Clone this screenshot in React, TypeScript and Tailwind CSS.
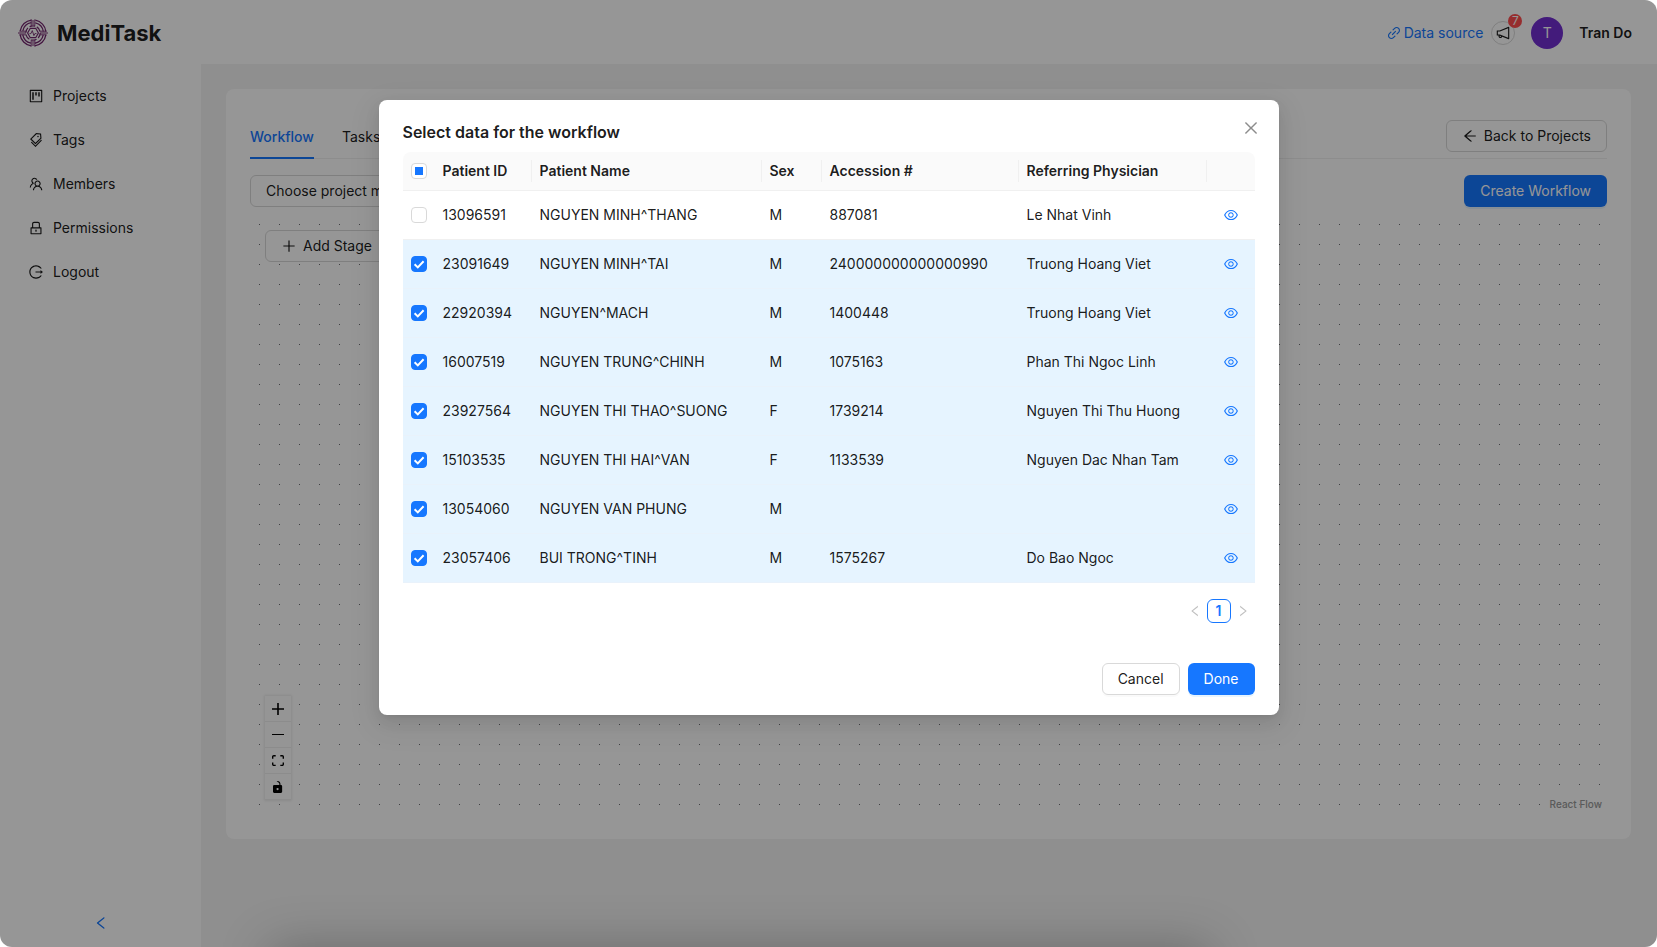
import { useEffect, useRef, useState } from "react";
import type { ReactNode } from "react";
import {
  AiOutlineArrowLeft,
  AiOutlineClose,
  AiOutlineEye,
  AiOutlineLeft,
  AiOutlineLink,
  AiOutlineLock,
  AiOutlineLogout,
  AiOutlineNotification,
  AiOutlinePlus,
  AiOutlineProject,
  AiOutlineRight,
  AiOutlineTags,
  AiOutlineTeam,
} from "react-icons/ai";

type Patient = {
  id: string;
  name: string;
  sex: string;
  accession: string;
  physician: string;
};

const patients: Patient[] = [
  { id: "13096591", name: "NGUYEN MINH^THANG", sex: "M", accession: "887081", physician: "Le Nhat Vinh" },
  { id: "23091649", name: "NGUYEN MINH^TAI", sex: "M", accession: "240000000000000990", physician: "Truong Hoang Viet" },
  { id: "22920394", name: "NGUYEN^MACH", sex: "M", accession: "1400448", physician: "Truong Hoang Viet" },
  { id: "16007519", name: "NGUYEN TRUNG^CHINH", sex: "M", accession: "1075163", physician: "Phan Thi Ngoc Linh" },
  { id: "23927564", name: "NGUYEN THI THAO^SUONG", sex: "F", accession: "1739214", physician: "Nguyen Thi Thu Huong" },
  { id: "15103535", name: "NGUYEN THI HAI^VAN", sex: "F", accession: "1133539", physician: "Nguyen Dac Nhan Tam" },
  { id: "13054060", name: "NGUYEN VAN PHUNG", sex: "M", accession: "", physician: "" },
  { id: "23057406", name: "BUI TRONG^TINH", sex: "M", accession: "1575267", physician: "Do Bao Ngoc" },
];

const navItems = [
  { label: "Projects", icon: AiOutlineProject },
  { label: "Tags", icon: AiOutlineTags },
  { label: "Members", icon: AiOutlineTeam },
  { label: "Permissions", icon: AiOutlineLock },
  { label: "Logout", icon: AiOutlineLogout },
];

const columns = [
  { title: "Patient ID", width: "w-[97px]" },
  { title: "Patient Name", width: "w-[230px]" },
  { title: "Sex", width: "w-[60px]" },
  { title: "Accession #", width: "w-[197px]" },
  { title: "Referring Physician", width: "w-[188px]" },
];

function Logo() {
  return (
    <svg viewBox="0 0 30 30" className="size-[30px]" fill="none" stroke="#74286f" aria-hidden="true">
      <circle cx="15" cy="15" r="13" strokeWidth="1.3" strokeDasharray="16.42 4" strokeDashoffset="-2" />
      <circle cx="15" cy="15" r="10.4" strokeWidth="1.3" strokeDasharray="12.34 4" strokeDashoffset="-2" />
      <path d="M13.2 1.4v7M16.8 1.4v7M13.2 21.6v7M16.8 21.6v7M1.4 13.2h7M1.4 16.8h7M21.6 13.2h7M21.6 16.8h7" strokeWidth=".9" />
      <path d="M0 15h8M22 15h8M15 2v5M15 23v5" strokeWidth="1" />
      <circle cx="15" cy="15" r="7.2" strokeWidth="1.2" strokeDasharray="5.5 2.04" />
      <path d="M12.3 10.3h5.4l2.7 4.7-2.7 4.7h-5.4L9.6 15z" strokeWidth="1.2" />
      <path d="M11.5 15.6h1.4l1.4-3 1.6 5 1-2h1.6" strokeWidth=".9" />
    </svg>
  );
}

function Header() {
  return (
    <header className="flex h-16 items-center justify-between bg-white pt-0.5 pr-[25px] pl-[18px]">
      <div className="flex items-center gap-[9px]">
        <Logo />
        <h1 className="text-[22px] font-bold">MediTask</h1>
      </div>
      <div className="flex items-center">
        <a href="#data-source" className="flex items-center gap-0.5 text-[#1677ff]">
          <AiOutlineLink className="size-4" />
          Data source
        </a>
        <button type="button" aria-label="Notifications" className="relative ml-2 flex size-6 items-center justify-center rounded-full border border-[#d9d9d9]">
          <AiOutlineNotification className="size-4" />
          <span className="absolute -top-2 -right-2 flex size-3.5 items-center justify-center rounded-full bg-[#ff4d4f] text-xs text-white">
            7
          </span>
        </button>
        <span className="ml-4 flex size-8 items-center justify-center rounded-full bg-[#722ed1] text-white">T</span>
        <span className="ml-4 font-semibold">Tran Do</span>
      </div>
    </header>
  );
}

function Sidebar() {
  return (
    <aside className="flex w-[201px] shrink-0 flex-col justify-between bg-white">
      <nav className="flex flex-col gap-1 p-1 pt-3">
        {navItems.map(({ label, icon: Icon }) => (
          <a key={label} href={`#${label.toLowerCase()}`} className="flex h-10 items-center gap-[9px] rounded-lg pl-6">
            <Icon className="size-4" />
            {label}
          </a>
        ))}
      </nav>
      <button type="button" aria-label="Collapse menu" className="flex h-12 items-center justify-center text-[#1677ff]">
        <AiOutlineLeft className="size-4" />
      </button>
    </aside>
  );
}

function FlowControl({ label, children }: { label: string; children: ReactNode }) {
  return (
    <button type="button" aria-label={label} className="flex size-[26px] items-center justify-center border-b border-[#eeeeee] bg-[#fefefe]">
      {children}
    </button>
  );
}

function FlowCanvas() {
  return (
    <div className="relative mt-2 h-[600px]">
      <svg className="absolute inset-0 size-full" aria-hidden="true">
        <pattern id="flow-dots" width="20" height="20" patternUnits="userSpaceOnUse">
          <rect x="9" y="9" width="1" height="1" fill="#6a6a70" />
        </pattern>
        <rect width="100%" height="100%" fill="url(#flow-dots)" />
      </svg>
      <div className="relative flex h-full flex-col items-start justify-between p-[15px]">
        <button type="button" className="flex h-8 items-center gap-1.5 rounded-md border border-[#d9d9d9] bg-white px-[15px]">
          <AiOutlinePlus className="size-4" />
          Add Stage
        </button>
        <div className="flex w-full items-end justify-between">
          <div className="flex flex-col shadow-[0_0_2px_1px_rgba(0,0,0,0.08)]">
            <FlowControl label="Zoom in">
              <svg viewBox="0 0 32 32" className="size-3"><path d="M32 18.133H18.133V32h-4.266V18.133H0v-4.266h13.867V0h4.266v13.867H32z" /></svg>
            </FlowControl>
            <FlowControl label="Zoom out">
              <svg viewBox="0 0 32 5" className="w-3"><path d="M0 0h32v4.2H0z" /></svg>
            </FlowControl>
            <FlowControl label="Fit view">
              <svg viewBox="0 0 32 30" className="w-3"><path d="M3.692 4.63c0-.53.4-.938.939-.938h5.215V0H4.708C2.13 0 0 2.054 0 4.63v5.216h3.692V4.631zM27.354 0h-5.2v3.692h5.17c.53 0 .984.4.984.939v5.215H32V4.631A4.624 4.624 0 0027.354 0zm.954 24.83c0 .532-.4.94-.939.94h-5.215v3.768h5.215c2.577 0 4.631-2.13 4.631-4.707v-5.139h-3.692v5.139zm-23.677.94a.919.919 0 01-.939-.94v-5.138H0v5.139c0 2.577 2.13 4.707 4.708 4.707h5.138V25.77H4.631z" /></svg>
            </FlowControl>
            <FlowControl label="Toggle interactivity">
              <svg viewBox="0 0 25 32" className="h-3"><path d="M21.333 10.667H19.81V7.619C19.81 3.429 16.38 0 12.19 0c-4.114 1.828-1.37 2.133.305 2.438 1.676.305 4.42 2.59 4.42 5.181v3.048H3.047A3.056 3.056 0 000 13.714v15.238A3.056 3.056 0 003.048 32h18.285a3.056 3.056 0 003.048-3.048V13.714a3.056 3.056 0 00-3.048-3.047zM12.19 24.533a3.056 3.056 0 01-3.047-3.047 3.056 3.056 0 013.047-3.048 3.056 3.056 0 013.048 3.048 3.056 3.056 0 01-3.047 3.047z" /></svg>
            </FlowControl>
          </div>
          <a href="#react-flow" className="-mr-3.5 -mb-[15px] bg-white/50 px-1 py-1 text-[10px] leading-3.5 font-medium text-[#999999]">
            React Flow
          </a>
        </div>
      </div>
    </div>
  );
}

function Workspace() {
  return (
    <main className="flex-1 bg-[#f3f3f3] py-[25px] pr-[26px] pl-[25px]">
      <section className="rounded-lg bg-white p-6 pt-[31px]">
        <div className="flex items-start justify-between border-b border-[#f0f0f0]">
          <div role="tablist" className="-mb-px flex gap-7">
            <button type="button" role="tab" aria-selected="true" className="h-[39px] border-b-2 border-[#1677ff] pb-1 font-medium text-[#1677ff]">
              Workflow
            </button>
            <button type="button" role="tab" aria-selected="false" className="h-[39px] pb-1.5">
              Tasks
            </button>
          </div>
          <button type="button" className="flex h-8 items-center gap-1.5 rounded-md border border-[#d9d9d9] px-[15px]">
            <AiOutlineArrowLeft className="size-4" />
            Back to Projects
          </button>
        </div>
        <div className="mt-4 flex items-center justify-between">
          <button type="button" className="h-8 rounded-md border border-[#d9d9d9] px-[15px]">
            Choose project members
          </button>
          <button type="button" className="h-8 rounded-md bg-[#1677ff] px-4 text-white shadow-[0_2px_0_rgba(5,145,255,0.1)]">
            Create Workflow
          </button>
        </div>
        <FlowCanvas />
      </section>
    </main>
  );
}

const checkboxStyle =
  "block size-4 appearance-none rounded-sm border border-[#d9d9d9] bg-white bg-center bg-no-repeat";

function Checkbox({ label, checked, onChange }: { label: string; checked: boolean; onChange: () => void }) {
  return (
    <span className="relative block size-4">
      <input
        type="checkbox"
        aria-label={label}
        checked={checked}
        onChange={onChange}
        className={`${checkboxStyle} checked:border-[#1677ff] checked:bg-[#1677ff]`}
      />
      {checked && (
        <svg viewBox="0 0 16 16" className="pointer-events-none absolute inset-0 size-4" fill="none" stroke="#fff" strokeWidth="2">
          <path d="M3.6 8.2l3.2 3.2 5.8-6.2" />
        </svg>
      )}
    </span>
  );
}

function SelectDataDialog() {
  const [selected, setSelected] = useState<string[]>(patients.slice(1).map((p) => p.id));
  const allRef = useRef<HTMLInputElement>(null);
  const all = selected.length === patients.length;
  const partial = selected.length > 0 && !all;

  useEffect(() => {
    if (allRef.current) allRef.current.indeterminate = partial;
  }, [partial]);

  const toggle = (id: string) =>
    setSelected((ids) => (ids.includes(id) ? ids.filter((x) => x !== id) : [...ids, id]));

  return (
    <div
      role="dialog"
      aria-modal="true"
      aria-labelledby="dialog-title"
      className="relative w-[900px] max-w-full rounded-lg bg-white px-6 py-5 shadow-[0_6px_16px_0_rgba(0,0,0,0.08),0_3px_6px_-4px_rgba(0,0,0,0.12),0_9px_28px_8px_rgba(0,0,0,0.05)]"
    >
      <h2 id="dialog-title" className="mb-2 text-base leading-6 font-semibold">
        Select data for the workflow
      </h2>
      <button type="button" aria-label="Close" className="absolute top-[17px] right-[17px] flex size-[22px] items-center justify-center text-black/45">
        <AiOutlineClose className="size-[18px]" />
      </button>

      <table className="w-full table-fixed border-separate border-spacing-0 text-left">
        <thead>
          <tr>
            <th className="w-8 rounded-tl-lg border-b border-[#f0f0f0] bg-[#fafafa] p-2">
              <span className="relative block size-4">
                <input
                  ref={allRef}
                  type="checkbox"
                  aria-label="Select all"
                  checked={all}
                  onChange={() => setSelected(all ? [] : patients.map((p) => p.id))}
                  className={checkboxStyle}
                />
                {partial && <span className="pointer-events-none absolute inset-1 bg-[#1677ff]" />}
              </span>
            </th>
            {columns.map(({ title, width }) => (
              <th key={title} className={`relative border-b border-[#f0f0f0] bg-[#fafafa] p-2 font-semibold ${width}`}>
                {title}
                <span className="absolute top-2 right-0 h-[22px] w-px bg-[#f0f0f0]" />
              </th>
            ))}
            <th aria-label="Preview" className="rounded-tr-lg border-b border-[#f0f0f0] bg-[#fafafa]" />
          </tr>
        </thead>
        <tbody>
          {patients.map((p) => {
            const checked = selected.includes(p.id);
            const cell = checked ? "border-b border-[#e9f2fb] bg-[#e6f4ff] px-2" : "border-b border-[#f0f0f0] px-2";
            return (
              <tr key={p.id} className="h-[49px]">
                <td className={cell}>
                  <Checkbox label={`Select ${p.name}`} checked={checked} onChange={() => toggle(p.id)} />
                </td>
                <td className={cell}>{p.id}</td>
                <td className={cell}>{p.name}</td>
                <td className={cell}>{p.sex}</td>
                <td className={cell}>{p.accession}</td>
                <td className={cell}>{p.physician}</td>
                <td className={cell}>
                  <button type="button" aria-label={`View ${p.name}`} className="flex h-8 w-full items-center justify-center text-[#1677ff]">
                    <AiOutlineEye className="size-4" />
                  </button>
                </td>
              </tr>
            );
          })}
        </tbody>
      </table>

      <nav aria-label="Pagination" className="mt-4 flex justify-end">
        <button type="button" disabled aria-label="Previous page" className="flex size-6 items-center justify-center text-black/25">
          <AiOutlineLeft className="size-3.5" />
        </button>
        <button type="button" className="size-6 rounded-md border border-[#1677ff] leading-none font-semibold text-[#1677ff]">
          1
        </button>
        <button type="button" disabled aria-label="Next page" className="flex size-6 items-center justify-center text-black/25">
          <AiOutlineRight className="size-3.5" />
        </button>
      </nav>

      <div className="mt-10 flex justify-end gap-2">
        <button type="button" className="h-8 rounded-md border border-[#d9d9d9] px-[15px] shadow-[0_2px_0_rgba(0,0,0,0.02)]">
          Cancel
        </button>
        <button type="button" className="h-8 rounded-md bg-[#1677ff] px-4 text-white shadow-[0_2px_0_rgba(5,145,255,0.1)]">
          Done
        </button>
      </div>
    </div>
  );
}

export default function App() {
  return (
    <div className="relative flex min-h-screen flex-col overflow-hidden rounded-xl font-[Inter,sans-serif] text-sm leading-[22px] text-black/90">
      <Header />
      <div className="flex flex-1">
        <Sidebar />
        <Workspace />
      </div>
      <div className="absolute inset-0 flex items-start justify-center overflow-hidden bg-black/41 pt-[100px]">
        <SelectDataDialog />
        <div className="absolute top-full left-[270px] h-20 w-[940px] shadow-[0_0_50px_rgba(0,0,0,0.25)]" />
      </div>
    </div>
  );
}
